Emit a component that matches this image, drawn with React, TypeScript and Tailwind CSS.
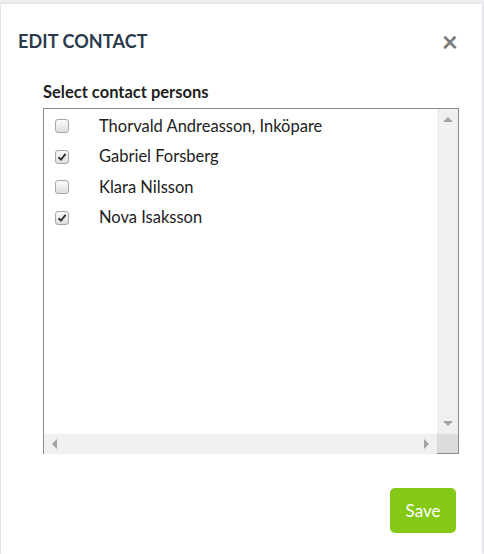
import React, { useState } from 'react';

const people = [
  { name: 'Thorvald Andreasson, Inköpare', checked: false },
  { name: 'Gabriel Forsberg', checked: true },
  { name: 'Klara Nilsson', checked: false },
  { name: 'Nova Isaksson', checked: true },
];

const Check = ({ on }: { on: boolean }) => (
  <span className="w-[14px] h-[14px] rounded-[3px] border border-[#a6a6a6] bg-gradient-to-b from-[#fbfbfb] to-[#dedede] flex items-center justify-center">
    {on && (
      <svg width="10" height="10" viewBox="0 0 10 10">
        <path d="M1.5 5.2 L4 7.6 L8.6 1.8" fill="none" stroke="#333" strokeWidth="1.9" />
      </svg>
    )}
  </span>
);

export default function App() {
  const [list, setList] = useState(people);

  return (
    <div className="w-[484px] h-[554px] bg-[#eceef1] pt-[4px] pl-[1px] pr-[2px] overflow-hidden font-['Lato','Noto_Sans',sans-serif]">
      <div className="h-full bg-white shadow-[0_0_3px_rgba(0,0,0,0.12)] flex flex-col">
        {/* Header */}
        <div className="flex items-center justify-between pl-[17px] pr-[24px] pt-[18px] h-[56px]">
          <h2 className="text-[18px] font-bold text-[#2b3b4c] tracking-[0.1px]">EDIT CONTACT</h2>
          <span className="text-[28px] leading-none font-bold text-[#7a7a7a]">×</span>
        </div>

        {/* Body */}
        <div className="pl-[42px] pr-[23px] pt-[22px]">
          <div className="text-[16.5px] font-bold text-[#1e1e1e] leading-[20px]">Select contact persons</div>
          <div className="mt-[6px] h-[346px] border border-[#8a8a8a] border-b-0 flex flex-col">
            <div className="flex-1 flex min-h-0">
              <div className="flex-1 pt-[2px]">
                {list.map((p, i) => (
                  <label
                    key={p.name}
                    className="flex items-center h-[30.5px] pl-[11px] cursor-pointer"
                    onClick={() => setList(list.map((q, j) => (j === i ? { ...q, checked: !q.checked } : q)))}
                  >
                    <Check on={p.checked} />
                    <span className="ml-[30px] text-[16.5px] text-[#222]">{p.name}</span>
                  </label>
                ))}
              </div>
              <div className="w-[21px] bg-[#f0f0f0] flex flex-col items-center justify-between py-[8px]">
                <span className="w-0 h-0 border-l-[5px] border-r-[5px] border-b-[5px] border-l-transparent border-r-transparent border-b-[#a3a3a3]" />
                <span className="w-0 h-0 border-l-[5px] border-r-[5px] border-t-[5px] border-l-transparent border-r-transparent border-t-[#a3a3a3]" />
              </div>
            </div>
            <div className="h-[20px] flex">
              <div className="flex-1 bg-[#f0f0f0] flex items-center justify-between px-[8px]">
                <span className="w-0 h-0 border-t-[5px] border-b-[5px] border-r-[5px] border-t-transparent border-b-transparent border-r-[#a3a3a3]" />
                <span className="w-0 h-0 border-t-[5px] border-b-[5px] border-l-[5px] border-t-transparent border-b-transparent border-l-[#a3a3a3]" />
              </div>
              <div className="w-[21px] bg-[#dcdcdc] border-b border-[#8a8a8a]" />
            </div>
          </div>
        </div>

        {/* Footer */}
        <div className="flex justify-end pr-[26px] pt-[34px]">
          <button className="w-[66px] h-[45px] rounded-[5px] bg-[#84c916] text-white text-[17px]">Save</button>
        </div>
      </div>
    </div>
  );
}
